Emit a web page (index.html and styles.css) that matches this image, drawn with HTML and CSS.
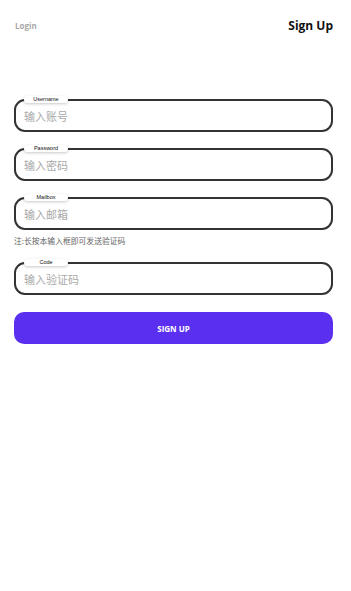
FILE: index.html
```html
<!DOCTYPE html>
<html lang="zh">
<head>
<meta charset="utf-8">
<title>Sign Up</title>
<link rel="stylesheet" href="styles.css">
</head>
<body>
<div class="page">
  <header class="header">
    <span class="tab-login">Login</span>
    <span class="tab-signup">Sign Up</span>
  </header>
  <form class="form">
    <div class="field">
      <span class="field-label">Username</span>
      <span class="field-input">输入账号</span>
    </div>
    <div class="field">
      <span class="field-label">Password</span>
      <span class="field-input">输入密码</span>
    </div>
    <div class="field">
      <span class="field-label">Mailbox</span>
      <span class="field-input">输入邮箱</span>
    </div>
    <p class="note">注:长按本输入框即可发送验证码</p>
    <div class="field">
      <span class="field-label">Code</span>
      <span class="field-input">输入验证码</span>
    </div>
    <div class="submit">SIGN UP</div>
  </form>
</div>
</body>
</html>
```

FILE: styles.css
```css
html, body {
  margin: 0;
  padding: 0;
  background: #ffffff;
}
body {
  font-family: "Open Sans", "Noto Sans CJK SC", sans-serif;
}
.page {
  padding: 0 18px 0 14px;
}
.header {
  display: flex;
  justify-content: space-between;
  align-items: center;
  height: 14px;
  padding-top: 18px;
}
.tab-login {
  font-size: 8px;
  font-weight: 700;
  color: #a8a8a8;
  padding-left: 1px;
}
.tab-signup {
  font-size: 12px;
  font-weight: 700;
  color: #111111;
}
.form {
  display: flex;
  flex-direction: column;
  margin-top: 67px;
}
.field {
  position: relative;
  height: 33px;
  box-sizing: border-box;
  border: 2px solid #333333;
  border-radius: 11px;
  display: flex;
  align-items: center;
  padding-left: 8px;
  margin-bottom: 16px;
}
.field-label {
  position: absolute;
  top: -5px;
  left: 8px;
  width: 44px;
  height: 7px;
  line-height: 7px;
  border-radius: 4px;
  background: #ffffff;
  box-shadow: 0 1px 3px rgba(0, 0, 0, 0.22);
  font-family: "Liberation Sans", sans-serif;
  font-size: 5.5px;
  color: #111111;
  text-align: center;
}
.field-input {
  font-family: "Noto Sans CJK SC", sans-serif;
  font-size: 11px;
  color: #a9a9a9;
  margin-top: 1px;
}
.note {
  margin: -11px 0 15px 0;
  font-family: "Noto Sans CJK SC", sans-serif;
  font-size: 7.8px;
  line-height: 12px;
  color: #666666;
}
.submit {
  margin-top: 1px;
  height: 32px;
  border-radius: 10px;
  background: #5a2ff0;
  color: #ffffff;
  font-size: 8px;
  font-weight: 700;
  display: flex;
  align-items: center;
  justify-content: center;
}
```
